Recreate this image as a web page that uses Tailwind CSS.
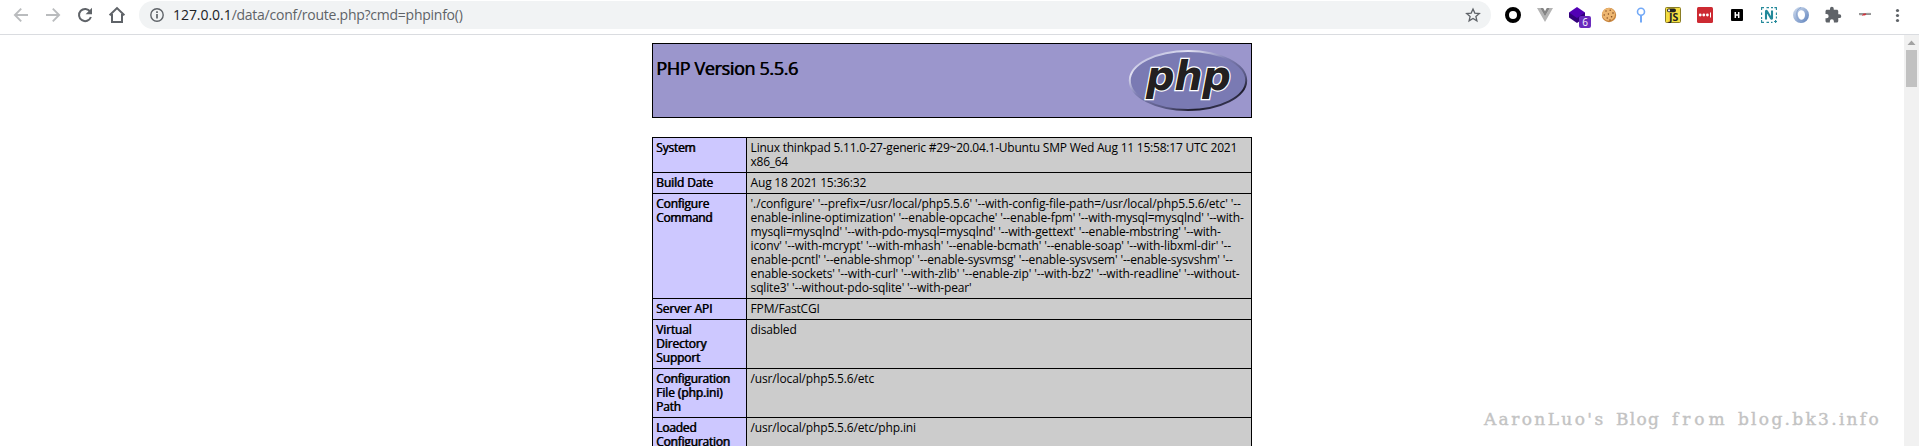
<!DOCTYPE html>
<html lang="en">
<head>
<meta charset="utf-8">
<title>phpinfo()</title>
<script src="https://cdn.jsdelivr.net/npm/@tailwindcss/browser@4"></script>
</head>
<body class="bg-white text-black h-[446px] overflow-hidden flex flex-col font-['Open_Sans',sans-serif]">
<header class="h-[35px] shrink-0 border-b border-[#dadce0] bg-white flex items-start pl-[5px] pr-1.5 pt-px">
  <nav class="flex h-7 items-center">
    <span class="w-8 flex justify-center"><svg width="16" height="16" viewBox="0 0 16 16" fill="none" stroke="#babcbe" stroke-width="1.9"><path d="M15 8H2.2M8.2 1.7 1.9 8l6.3 6.3"/></svg></span>
    <span class="w-8 flex justify-center"><svg width="16" height="16" viewBox="0 0 16 16" fill="none" stroke="#babcbe" stroke-width="1.9"><path d="M1 8h12.8M7.8 1.7 14.1 8l-6.3 6.3"/></svg></span>
    <span class="w-8 flex justify-center"><svg width="16" height="16" viewBox="0 0 16 16"><path d="M13.2 4.6A6.1 6.1 0 1 0 13.9 10" fill="none" stroke="#5f6368" stroke-width="2"/><path d="M15 .8v6.4H8.6z" fill="#5f6368"/></svg></span>
    <span class="w-8 flex justify-center"><svg width="18" height="18" viewBox="0 0 18 18" fill="none" stroke="#5f6368" stroke-width="2"><path d="M1.6 9.2 9 2.1l7.4 7.1M4 8v8.1h10V8"/></svg></span>
  </nav>
  <div class="ml-1.5 mr-1.5 grow h-7 rounded-full bg-[#f1f3f4] flex items-center pl-[11px] pr-[10px]">
    <svg width="14" height="14" viewBox="0 0 14 14" fill="none" stroke="#5f6368" stroke-width="1.4"><circle cx="7" cy="7" r="6.2"/><path d="M7 6.1v4.4M7 3.3v1.6" stroke-width="1.7"/></svg>
    <div class="ml-[9px] grow flex text-sm leading-7 whitespace-pre text-[#5f6368]"><span class="text-[#202124] tracking-[-0.05px]">127.0.0.1</span><span class="tracking-[-0.25px]">/data/conf/route.php?cmd=phpinfo()</span></div>
    <svg width="16" height="16" viewBox="0 0 16 16" fill="none" stroke="#5f6368" stroke-width="1.3"><path d="m8 2 1.8 4.1 4.5.4-3.4 2.9 1 4.4L8 11.5l-3.9 2.3 1-4.4-3.4-2.9 4.500-.4z"/></svg>
  </div>
  <div class="flex h-7 items-center">
    <span class="w-8 flex justify-center"><svg width="16" height="16" viewBox="0 0 16 16"><circle cx="8" cy="8" r="6" fill="none" stroke="#000" stroke-width="4"/></svg></span>
    <span class="w-8 flex justify-center"><svg width="16" height="16" viewBox="0 0 16 16"><path d="M0 1h3.2L8 9.4 12.8 1H16L8 15z" fill="#b4b4b4"/><path d="M3.2 1h3L8 4.2 9.8 1h3L8 9.4z" fill="#858585"/></svg></span>
    <span class="w-8 flex justify-center relative"><svg width="16" height="16" viewBox="0 0 16 16"><path d="M0 5.6v4.9L8 16l8-5.5V5.6z" fill="#33007b"/><path d="m8 0 8 5.6L8 11 0 5.6z" fill="#5200b5"/></svg><b class="absolute left-[18px] top-[9px] size-3 rounded-[2px] bg-[#6a2bbd] text-white text-[10px] leading-3 font-normal text-center">6</b></span>
    <span class="w-8 flex justify-center"><svg width="16" height="16" viewBox="0 0 16 16"><circle cx="8" cy="8" r="7.2" fill="#c8843c"/><circle cx="7.6" cy="7.3" r="6.4" fill="#edb670"/><g fill="#7b421d"><circle cx="5" cy="4" r=".7"/><circle cx="9.2" cy="3.3" r=".7"/><circle cx="12" cy="6" r=".8"/><circle cx="7.4" cy="7" r=".7"/><circle cx="3.2" cy="8" r=".7"/><circle cx="10.6" cy="9.8" r=".8"/><circle cx="6.2" cy="11" r=".7"/><circle cx="9" cy="13" r=".7"/></g></svg></span>
    <span class="w-8 flex justify-center"><svg width="16" height="16" viewBox="0 0 16 16" fill="none" stroke="#73a9f7" stroke-width="1.6"><circle cx="8" cy="4.8" r="3.5"/><path d="M8 8.3V15.6" stroke-width="2"/></svg></span>
    <span class="w-8 flex justify-center"><svg width="16" height="16" viewBox="0 0 16 16"><rect x=".5" y=".5" width="15" height="15" rx="1" fill="#f4de41" stroke="#8a7d24"/><rect x="2" y="1.6" width="9" height="3.600" rx="1.8" fill="#222"/><circle cx="4" cy="3.400" r="1.100" fill="#eee"/><text x="4" y="14.200" font-size="10.500" font-weight="700" font-family="Open Sans" fill="#222">JS</text></svg></span>
    <span class="w-8 flex justify-center"><svg width="16" height="16" viewBox="0 0 16 16"><rect width="16" height="16" rx="1.5" fill="#cd2a32"/><g fill="#fff"><circle cx="3.2" cy="8" r="1.4"/><circle cx="6.8" cy="8" r="1.4"/><circle cx="10.4" cy="8" r="1.4"/><path d="M13 5.4h1v5.2h-1z"/></g></svg></span>
    <span class="w-8 flex justify-center"><svg width="16" height="16" viewBox="0 0 16 16"><rect x="2" y="2" width="12" height="12" rx="1" fill="#000"/><path d="M6.3 5v6M9.7 5v6M6.3 8h3.4" stroke="#fff" stroke-width="1.5"/></svg></span>
    <span class="w-8 flex justify-center"><svg width="16" height="16" viewBox="0 0 16 16" fill="none" stroke="#23899a"><path d="M.6 3V.6H3M5.5.6H8M10 .6h2M13.4.6h2V3M.6 5.5V8M.6 10v2M.6 13v2.4H3M5.5 15.4H8M10 15.4h1.5M15.4 5.5V8M15.4 9.6v2M14.6 13v3M13.1 14.5h3" stroke-width="1.1"/><path d="M5 12.6V4.8Q5 3 6.3 4.8l3.4 6Q11 12.6 11 11V3.4" stroke-width="2.1"/></svg></span>
    <span class="w-8 flex justify-center"><svg width="16" height="16" viewBox="0 0 16 16"><defs><linearGradient id="ring" x2="1" y2="1"><stop stop-color="#d5e0f0"/><stop offset="1" stop-color="#5c80bb"/></linearGradient></defs><path fill-rule="evenodd" d="M8 0a8 8 0 1 1 0 16A8 8 0 0 1 8 0zm.7 3.2C5.500 3.2 4.500 6 4.900 8.2c.4 2.7 2 4.600 3.800 4.600 2 0 3.300-2 3.300-4.700S10.900 3.200 8.700 3.200z" fill="url(#ring)"/><path d="M8 .6C4.200 2 3 6 4 9.600c.600 2.800 2.500 4.500 5.500 5.600" fill="none" stroke="#8aa5d0"/></svg></span>
    <span class="w-8 flex justify-center"><svg width="18" height="18" viewBox="0 0 24 24" fill="#5f6368"><path d="M20.500 11H19V7c0-1.100-.900-2-2-2h-4V3.500a2.500 2.500 0 0 0-5 0V5H4c-1.100 0-1.990.900-1.990 2v3.800H3.500a2.700 2.700 0 0 1 0 5.400H2V20c0 1.100.900 2 2 2h3.800v-1.500a2.700 2.700 0 0 1 5.400 0V22H17c1.100 0 2-.900 2-2v-4h1.500a2.500 2.500 0 0 0 0-5z"/></svg></span>
    <span class="w-8 flex justify-center"><svg width="14" height="16" viewBox="0 0 14 16" fill="none"><path d="M1 7h12" stroke="#666" stroke-width="1.400"/><path d="M1.500 7.900h3M8.500 6.300h4" stroke="#aaa" stroke-width=".8"/><path d="m4.500 8.600 2-2M6.300 8.200l1.600-1.400" stroke="#d3303a" stroke-width="1.300"/></svg></span>
    <span class="w-8 flex justify-center"><svg width="16" height="16" viewBox="0 0 16 16" fill="#5f6368"><circle cx="8.500" cy="3.500" r="1.600"/><circle cx="8.500" cy="8.500" r="1.600"/><circle cx="8.500" cy="13.500" r="1.600"/></svg></span>
  </div>
</header>

<div class="grow min-h-0 flex relative">
  <main class="grow min-w-0 flex flex-col items-center pt-2 overflow-hidden">
    <section class="w-[600px] h-[75px] shrink-0 border border-black bg-[#9b96cc] flex justify-between pl-[3px] pr-[3px]">
      <h1 class="mt-3 text-lg leading-6 tracking-[-0.36px] [text-shadow:0.7px_0_0_black]">PHP Version 5.5.6</h1>
      <svg class="mt-[3px]" width="120" height="67" viewBox="0 0 120 67">
        <defs><linearGradient id="rim" x1="0.1" y1="0" x2="0.9" y2="1"><stop stop-color="#a6a6d2"/><stop offset=".2" stop-color="#e2e2f2"/><stop offset=".42" stop-color="#8080b5"/><stop offset=".7" stop-color="#55557f"/><stop offset=".83" stop-color="#1d1b2a"/><stop offset="1" stop-color="#555588"/></linearGradient></defs>
        <ellipse cx="60" cy="33.500" rx="58.200" ry="29.500" fill="#7a7ab3" stroke="url(#rim)" stroke-width="2"/>
        <text x="18" y="43" font-family="DejaVu Sans" font-size="40" font-weight="700" font-style="italic" textLength="85" fill="#231f20" stroke="#fff" stroke-width="2.400" paint-order="stroke">php</text>
      </svg>
    </section>

    <table class="mt-[19px] w-[600px] shrink-0 table-fixed border-collapse bg-[#cccccc] text-xs leading-[14px] whitespace-nowrap [&_td]:border [&_td]:border-black [&_td]:align-top [&_td]:p-[3px] [&_td:last-child]:pl-[3.6px] [&_span]:block [&_td:first-child]:bg-[#cdc8ff] [&_td:first-child]:[text-shadow:0.6px_0_0_black]">
      <colgroup><col class="w-[94px]"><col></colgroup>
      <tr><td class="tracking-[-0.2px]">System</td><td><span class="tracking-[-0.225px]">Linux thinkpad 5.11.0-27-generic #29~20.04.1-Ubuntu SMP Wed Aug 11 15:58:17 UTC 2021</span><span class="tracking-[-0.3px]">x86_64</span></td></tr>
      <tr><td class="tracking-[-0.12px]">Build Date</td><td class="tracking-[-0.2px]">Aug 18 2021 15:36:32</td></tr>
      <tr><td class="tracking-[-0.2px]"><span>Configure</span><span class="tracking-[-0.33px]">Command</span></td><td>
        <span class="tracking-[-0.124px]">'./configure' '--prefix=/usr/local/php5.5.6' '--with-config-file-path=/usr/local/php5.5.6/etc' '--</span>
        <span class="tracking-[-0.152px]">enable-inline-optimization' '--enable-opcache' '--enable-fpm' '--with-mysql=mysqlnd' '--with-</span>
        <span class="tracking-[-0.156px]">mysqli=mysqlnd' '--with-pdo-mysql=mysqlnd' '--with-gettext' '--enable-mbstring' '--with-</span>
        <span class="tracking-[-0.131px]">iconv' '--with-mcrypt' '--with-mhash' '--enable-bcmath' '--enable-soap' '--with-libxml-dir' '--</span>
        <span class="tracking-[-0.166px]">enable-pcntl' '--enable-shmop' '--enable-sysvmsg' '--enable-sysvsem' '--enable-sysvshm' '--</span>
        <span class="tracking-[-0.124px]">enable-sockets' '--with-curl' '--with-zlib' '--enable-zip' '--with-bz2' '--with-readline' '--without-</span>
        <span class="tracking-[-0.153px]">sqlite3' '--without-pdo-sqlite' '--with-pear'</span></td></tr>
      <tr><td class="tracking-[-0.1px]">Server API</td><td class="tracking-[-0.19px]">FPM/FastCGI</td></tr>
      <tr><td class="tracking-[-0.15px]"><span>Virtual</span><span>Directory</span><span>Support</span></td><td class="tracking-[-0.15px]">disabled</td></tr>
      <tr><td class="tracking-[-0.22px]"><span>Configuration</span><span class="tracking-[-0.1px]">File (php.ini)</span><span>Path</span></td><td class="tracking-[-0.151px]">/usr/local/php5.5.6/etc</td></tr>
      <tr><td class="tracking-[-0.22px]"><span>Loaded</span><span>Configuration</span></td><td class="tracking-[-0.151px]">/usr/local/php5.5.6/etc/php.ini</td></tr>
    </table>
  </main>
  <aside class="w-[15px] shrink-0 bg-[#f1f1f1] flex flex-col items-center">
    <svg width="15" height="15" viewBox="0 0 15 15"><path d="m7.500 5.500 4 4.500h-8z" fill="#a3a3a3"/></svg>
    <div class="w-[11px] h-[37px] bg-[#c1c1c1]"></div>
  </aside>
  <p class="absolute right-[38px] bottom-[15px] flex whitespace-nowrap font-['DejaVu_Serif',serif] text-[17px] leading-6 text-[#c3c3c3] [-webkit-text-stroke:0.4px_#c3c3c3]"><span class="w-[132px] tracking-[2.4px]">AaronLuo's</span><span class="w-[56px] tracking-[1.3px]">Blog</span><span class="w-[66px] tracking-[4px]">from</span><span class="tracking-[2.3px]">blog.bk3.info</span></p>
</div>
</body>
</html>
